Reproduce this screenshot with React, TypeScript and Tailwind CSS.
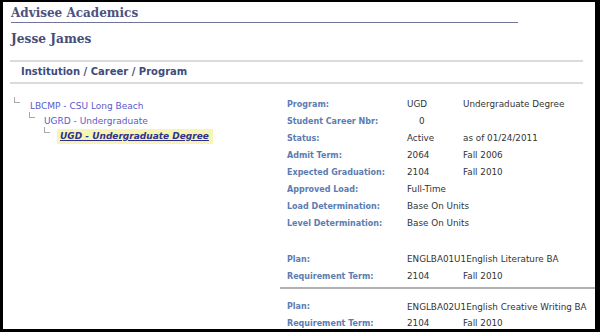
export default function App() {
  const rows = [
    { label: "Program:", a: "UGD", b: "Undergraduate Degree" },
    { label: "Student Career Nbr:", a: "0", b: "", indent: true },
    { label: "Status:", a: "Active", b: "as of 01/24/2011" },
    { label: "Admit Term:", a: "2064", b: "Fall 2006" },
    { label: "Expected Graduation:", a: "2104", b: "Fall 2010" },
    { label: "Approved Load:", a: "Full-Time", b: "" },
    { label: "Load Determination:", a: "Base On Units", b: "" },
    { label: "Level Determination:", a: "Base On Units", b: "" },
  ];

  return (
    <div className="w-[600px] h-[332px] bg-white border-black border-l-[3px] border-t-[2px] border-r-[5px] border-b-[3px] overflow-hidden font-['DejaVu_Sans',sans-serif]">
      {/* Page title */}
      <div className="pl-[8px] pt-[3px]">
        <h1 className="font-['DejaVu_Serif',serif] font-bold text-[12px] leading-[16px] text-[#4d5280]">
          Advisee Academics
        </h1>
        <div className="mt-[1px] w-[507px] h-px bg-[#70759a]" />
        <h2 className="mt-[7px] font-['DejaVu_Serif',serif] font-bold text-[12.2px] leading-[18px] text-[#474d78]">
          Jesse James
        </h2>
      </div>

      {/* Section header */}
      <div className="mt-[12px] ml-[7px] w-[573px] h-[2px] bg-[#d9dbdd]" />
      <div className="mt-[2px] pl-[18px] h-[16px] leading-[16px] text-[10px] font-bold text-[#3e4b7d]">
        Institution / Career / Program
      </div>
      <div className="mt-[2px] ml-[7px] w-[573px] h-[2px] bg-[#d9dbdd]" />

      <div className="flex">
        {/* Tree */}
        <div className="w-[277px] pt-[14.5px] text-[9px]">
          <div className="flex items-start h-[15px] pl-[11px]">
            <span className="mt-[-1.5px] w-[6px] h-[6px] border-l border-b border-[#a8a8a8] mr-[10px]" />
            <span className="leading-[15px] text-[#5a5acd]">LBCMP - CSU Long Beach</span>
          </div>
          <div className="flex items-start h-[15px] pl-[26px]">
            <span className="mt-[-2px] w-[6px] h-[6px] border-l border-b border-[#a8a8a8] mr-[9px]" />
            <span className="leading-[15px] text-[#5a5acd]">UGRD - Undergraduate</span>
          </div>
          <div className="flex items-start h-[15px] pl-[41px]">
            <span className="mt-[-1.5px] w-[6px] h-[6px] border-l border-b border-[#a8a8a8] mr-[7px]" />
            <span className="leading-[15px] pl-[3px] pr-[4px] bg-[#f8f4b4] font-bold italic underline text-[#2e3192]">
              UGD - Undergraduate Degree
            </span>
          </div>
        </div>

        {/* Details */}
        <div className="flex-1 pt-[11.5px] text-[8.8px] text-[#333333]">
          {rows.map((r) => (
            <div key={r.label} className="grid grid-cols-[127px_56px_1fr] h-[17px] leading-[17px] whitespace-nowrap">
              <span className="pl-[7px] text-[8px] font-bold text-[#5b7cb2]">{r.label}</span>
              <span className={r.indent ? "pl-[12px]" : ""}>{r.a}</span>
              <span>{r.b}</span>
            </div>
          ))}

          <div className="mt-[19px]">
            <div className="grid grid-cols-[127px_1fr] h-[17px] leading-[17px] whitespace-nowrap">
              <span className="pl-[7px] text-[8px] font-bold text-[#5b7cb2]">Plan:</span>
              <span>ENGLBA01U1English Literature BA</span>
            </div>
            <div className="grid grid-cols-[127px_56px_1fr] h-[17px] leading-[17px] whitespace-nowrap">
              <span className="pl-[7px] text-[8px] font-bold text-[#5b7cb2]">Requirement Term:</span>
              <span>2104</span>
              <span>Fall 2010</span>
            </div>
          </div>

          <div className="mt-[2.5px] h-[2px] bg-[#b0b0b0]" />

          <div className="mt-[9.5px]">
            <div className="grid grid-cols-[127px_1fr] h-[16px] leading-[16px] whitespace-nowrap">
              <span className="pl-[7px] text-[8px] font-bold text-[#5b7cb2]">Plan:</span>
              <span>ENGLBA02U1English Creative Writing BA</span>
            </div>
            <div className="grid grid-cols-[127px_56px_1fr] h-[17px] leading-[17px] whitespace-nowrap">
              <span className="pl-[7px] text-[8px] font-bold text-[#5b7cb2]">Requirement Term:</span>
              <span>2104</span>
              <span>Fall 2010</span>
            </div>
          </div>
        </div>
      </div>
    </div>
  );
}
